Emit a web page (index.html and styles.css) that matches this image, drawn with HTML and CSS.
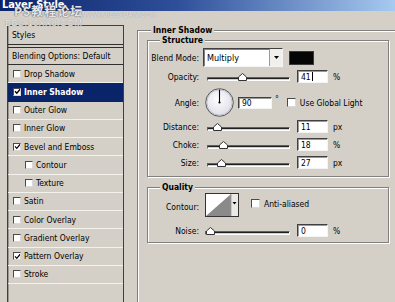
FILE: index.html
```html
<!DOCTYPE html>
<html>
<head>
<meta charset="utf-8">
<link rel="stylesheet" href="styles.css">
</head>
<body>
<div class="titlebar"><span class="title">Layer Style</span></div>
<div class="main">
  <div class="list">
    <div class="head">Styles</div>
    <div class="head2">Blending Options: Default</div>
    <div class="item"><span class="cb"></span>Drop Shadow</div>
    <div class="item sel"><span class="cb"><svg viewBox="0 0 7 7" width="7" height="7"><path d="M1 3.3L2.8 5.3L6.2 1.2" fill="none" stroke="#000" stroke-width="1.4"/></svg></span>Inner Shadow</div>
    <div class="item"><span class="cb"></span>Outer Glow</div>
    <div class="item"><span class="cb"></span>Inner Glow</div>
    <div class="item"><span class="cb"><svg viewBox="0 0 7 7" width="7" height="7"><path d="M1 3.3L2.8 5.3L6.2 1.2" fill="none" stroke="#000" stroke-width="1.2"/></svg></span>Bevel and Emboss</div>
    <div class="item sub"><span class="cb"></span>Contour</div>
    <div class="item sub"><span class="cb"></span>Texture</div>
    <div class="item"><span class="cb"></span>Satin</div>
    <div class="item"><span class="cb"></span>Color Overlay</div>
    <div class="item"><span class="cb"></span>Gradient Overlay</div>
    <div class="item"><span class="cb"><svg viewBox="0 0 7 7" width="7" height="7"><path d="M1 3.3L2.8 5.3L6.2 1.2" fill="none" stroke="#000" stroke-width="1.2"/></svg></span>Pattern Overlay</div>
    <div class="item"><span class="cb"></span>Stroke</div>
  </div>

  <div class="outer">
    <span class="gtitle outer-title">Inner Shadow</span>
    <div class="group structure">
      <span class="gtitle">Structure</span>
      <div class="row r-blend">
        <span class="lbl">Blend Mode:</span>
        <div class="select"><span class="sel-text">Multiply</span><span class="sel-btn"><svg width="5" height="3" viewBox="0 0 5 3"><path d="M0 0H5L2.5 3Z" fill="#000"/></svg></span></div>
        <span class="swatch"></span>
      </div>
      <div class="row r-std">
        <span class="lbl">Opacity:</span>
        <div class="track"><svg class="thumb" style="left:30px" width="9" height="8" viewBox="0 0 9 8"><path d="M0.5 7.5V4L4.5 0.5L8.5 4V7.5Z" fill="#fff" stroke="#333"/></svg></div>
        <div class="input">41<span class="caret"></span></div>
        <span class="unit">%</span>
      </div>
      <div class="row r-angle">
        <span class="lbl">Angle:</span>
        <svg class="dial" width="29" height="29" viewBox="0 0 29 29">
          <defs><radialGradient id="dg" cx="0.45" cy="0.4" r="0.6"><stop offset="0" stop-color="#ffffff"/><stop offset="1" stop-color="#dcdce6"/></radialGradient></defs>
          <circle cx="14.5" cy="14.5" r="13.8" fill="url(#dg)" stroke="#555" stroke-width="1"/>
          <circle cx="14.5" cy="14.5" r="12.6" fill="none" stroke="#b8b8c4" stroke-width="0.8"/>
          <line x1="14.5" y1="14.5" x2="14.5" y2="1.5" stroke="#000" stroke-width="1.1"/>
          <circle cx="14.5" cy="14.5" r="1.1" fill="#000"/>
        </svg>
        <div class="input ainput">90</div>
        <span class="deg">°</span>
        <span class="cb gcb"></span>
        <span class="cbtext">Use Global Light</span>
      </div>
      <div class="row r-std r-dist">
        <span class="lbl">Distance:</span>
        <div class="track"><svg class="thumb" style="left:5px" width="9" height="8" viewBox="0 0 9 8"><path d="M0.5 7.5V4L4.5 0.5L8.5 4V7.5Z" fill="#fff" stroke="#333"/></svg></div>
        <div class="input">11</div>
        <span class="unit">px</span>
      </div>
      <div class="row r-std r-next">
        <span class="lbl">Choke:</span>
        <div class="track"><svg class="thumb" style="left:11px" width="9" height="8" viewBox="0 0 9 8"><path d="M0.5 7.5V4L4.5 0.5L8.5 4V7.5Z" fill="#fff" stroke="#333"/></svg></div>
        <div class="input">18</div>
        <span class="unit">%</span>
      </div>
      <div class="row r-std r-next">
        <span class="lbl">Size:</span>
        <div class="track"><svg class="thumb" style="left:9px" width="9" height="8" viewBox="0 0 9 8"><path d="M0.5 7.5V4L4.5 0.5L8.5 4V7.5Z" fill="#fff" stroke="#333"/></svg></div>
        <div class="input">27</div>
        <span class="unit">px</span>
      </div>
    </div>

    <div class="group quality">
      <span class="gtitle">Quality</span>
      <div class="row r-contour">
        <span class="lbl">Contour:</span>
        <svg class="contour" width="34" height="24" viewBox="0 0 34 24">
          <rect x="0.5" y="0.5" width="33" height="23" fill="#fff" stroke="#333"/>
          <path d="M1 23L26 1V23Z" fill="#8a8a8a"/>
          <rect x="26" y="1" width="7" height="22" fill="#eceae4"/>
          <line x1="26" y1="1" x2="26" y2="23" stroke="#999" stroke-width="0.8"/>
          <path d="M27.5 9H31.5L29.5 11.5Z" fill="#000"/>
        </svg>
        <span class="cb acb"></span>
        <span class="cbtext">Anti-aliased</span>
      </div>
      <div class="row r-std r-noise">
        <span class="lbl">Noise:</span>
        <div class="track ntrack"><svg class="thumb" style="left:0px" width="9" height="8" viewBox="0 0 9 8"><path d="M0.5 7.5V4L4.5 0.5L8.5 4V7.5Z" fill="#fff" stroke="#333"/></svg></div>
        <div class="input">0</div>
        <span class="unit">%</span>
      </div>
    </div>
  </div>
</div>

<div class="wm wm1">PS教程论坛</div>
<div class="wm wm2">WWW.MISSYUAN.COM</div>
<div class="wm wm3">BBS.16XX8.COM</div>
</body>
</html>
```

FILE: styles.css
```css
* { box-sizing: border-box; }
html, body { margin: 0; padding: 0; }
body {
  width: 395px;
  height: 302px;
  overflow: hidden;
  position: relative;
  background: #d4d0c8;
  font-family: "DejaVu Sans Condensed", "DejaVu Sans", sans-serif;
  font-size: 8.5px;
  color: #000;
}

.titlebar {
  height: 11px;
  overflow: hidden;
  background: linear-gradient(to right, #0a246a 0%, #2f4f9a 45%, #a6caf0 100%);
}
.title {
  display: block;
  color: #fff;
  font-weight: bold;
  font-size: 11px;
  line-height: 12px;
  margin: -1px 0 0 2px;
  font-family: "DejaVu Sans Condensed", "DejaVu Sans", sans-serif;
}

.main {
  display: flex;
  align-items: flex-start;
}

/* left style list */
.list {
  margin: 14px 0 0 7px;
  width: 117px;
  height: 277px;
  border: 1px solid #404040;
  border-bottom: none;
  box-shadow: inset 1px 0 0 #9a9890;
  flex: none;
}
.head {
  height: 19px;
  padding-left: 4px;
  display: flex;
  align-items: center;
  border-bottom: 1px solid #303030;
}
.head2 {
  margin-top: 2px;
  height: 18px;
  padding-left: 4px;
  display: flex;
  align-items: center;
  border-top: 1px solid #303030;
  border-bottom: 1px solid #303030;
}
.item {
  height: 18.25px;
  display: flex;
  align-items: center;
  padding-left: 5px;
  border-bottom: 1px solid #f3f1ec;
  white-space: nowrap;
}
.item.sub { padding-left: 17px; }
.item.sel {
  background: #0a246a;
  color: #fff;
  font-weight: bold;
  border-bottom-color: #0a246a;
}
.cb {
  width: 8px;
  height: 8px;
  background: #fff;
  border-top: 1px solid #4a4a4a;
  border-left: 1px solid #4a4a4a;
  border-right: 1px solid #d8d8d8;
  border-bottom: 1px solid #d8d8d8;
  margin-right: 3px;
  flex: none;
  display: flex;
  align-items: center;
  justify-content: center;
  overflow: hidden;
}
.cb svg { display: block; flex: none; }

/* right side */
.outer {
  position: relative;
  margin: 19px 0 0 13px;
  width: 258px;
  height: 272px;
  border-top: 1px solid #808080;
  border-left: 1px solid #808080;
  box-shadow: inset 1px 1px 0 #fff;
  padding: 9px 0 0 9px;
  flex: none;
}
.gtitle {
  position: absolute;
  top: -7px;
  left: 12px;
  padding: 0 2px;
  background: #d4d0c8;
  font-weight: bold;
  line-height: 12px;
  white-space: nowrap;
}
.outer-title { left: 13px; }

.group {
  position: relative;
  width: 242px;
  border: 1px solid #808080;
  box-shadow: inset 1px 1px 0 #fff, 1px 1px 0 #fff;
}
.structure {
  height: 137px;
  padding-top: 7px;
}
.quality {
  margin-top: 10px;
  height: 56px;
  padding-top: 5px;
}

.row {
  display: flex;
  align-items: center;
  white-space: nowrap;
}
.lbl {
  width: 51px;
  text-align: right;
  flex: none;
}

/* blend */
.r-blend { height: 19px; }
.select {
  margin-left: 4px;
  width: 80px;
  height: 19px;
  display: flex;
  background: #fff;
  border-top: 1px solid #404040;
  border-left: 1px solid #404040;
  border-right: 1px solid #f4f4f4;
  border-bottom: 1px solid #f4f4f4;
  box-shadow: inset 1px 1px 0 #808080;
}
.sel-text {
  flex: 1;
  padding-left: 3px;
  display: flex;
  align-items: center;
  font-size: 9px;
}
.sel-btn {
  width: 13px;
  border-left: 1px solid #9a9a9a;
  background: #f0efeb;
  display: flex;
  align-items: center;
  justify-content: center;
}
.sel-btn svg { display: block; }
.swatch {
  margin-left: 6px;
  width: 25px;
  height: 14px;
  background: #050505;
  border: 1px solid #3a3a3a;
}

/* standard slider rows */
.r-std { height: 13px; margin-top: 3px; }
.r-dist { margin-top: 3px; }
.r-next { margin-top: 5px; }
.track {
  position: relative;
  margin-left: 8px;
  margin-top: 4px;
  width: 83px;
  height: 4px;
  border-top: 1px solid #606060;
  border-left: 1px solid #606060;
  border-bottom: 1px solid #fff;
  border-right: 1px solid #fff;
  background: #d4d0c8;
  box-shadow: inset 0 1px 0 #202020;
  flex: none;
}
.thumb {
  position: absolute;
  top: -5px;
  display: block;
}
.input {
  margin-left: 7px;
  width: 31px;
  height: 13px;
  background: #fff;
  border-top: 1px solid #404040;
  border-left: 1px solid #404040;
  border-right: 1px solid #f4f4f4;
  border-bottom: 1px solid #f4f4f4;
  box-shadow: inset 1px 1px 0 #9a9a9a;
  padding-left: 3px;
  display: flex;
  align-items: center;
  flex: none;
}
.caret {
  display: inline-block;
  width: 1px;
  height: 9px;
  background: #000;
  margin-left: 1px;
}
.unit { margin-left: 5px; }

/* angle */
.r-angle { height: 29px; margin-top: 5px; }
.dial { margin-left: 6px; display: block; flex: none; }
.ainput { margin-left: 4px; width: 34px; height: 12px; }
.deg { margin-left: 3px; align-self: flex-start; margin-top: 6px; }
.gcb { margin-left: 8px; margin-right: 4px; width: 9px; height: 9px; }
.cbtext { white-space: nowrap; }

/* quality */
.r-contour { height: 24px; }
.contour { margin-left: 6px; display: block; flex: none; }
.acb { margin-left: 12px; margin-right: 4px; width: 9px; height: 9px; margin-top: -4px; }
.r-contour .cbtext { margin-top: -3px; }
.r-contour .lbl { margin-top: 3px; }
.r-noise { margin-top: 7px; }
.ntrack { margin-left: 6px; width: 85px; }
.r-noise .thumb { left: 0; }

/* watermark overlay */
.wm {
  position: absolute;
  white-space: nowrap;
  color: rgba(250, 250, 250, 0.9);
}
.wm1 {
  left: 14px;
  top: 4px;
  font-family: "Noto Sans CJK SC", sans-serif;
  font-weight: bold;
  font-size: 12px;
  line-height: 14px;
  letter-spacing: 1px;
  text-shadow: 0 0 1px #4a4a5a, 0 0 1px #4a4a5a;
}
.wm2 {
  left: 80px;
  top: 11px;
  font-family: "Liberation Sans", sans-serif;
  font-size: 7px;
  line-height: 8px;
  color: rgba(245, 245, 245, 0.9);
  text-shadow: 0 0 1px #777;
}
.wm3 {
  left: 5px;
  top: 18px;
  font-family: "Liberation Sans", sans-serif;
  font-size: 9px;
  line-height: 10px;
  letter-spacing: 0.5px;
  color: rgba(245, 245, 245, 0.9);
  text-shadow: 0 0 1px #777;
}
```
